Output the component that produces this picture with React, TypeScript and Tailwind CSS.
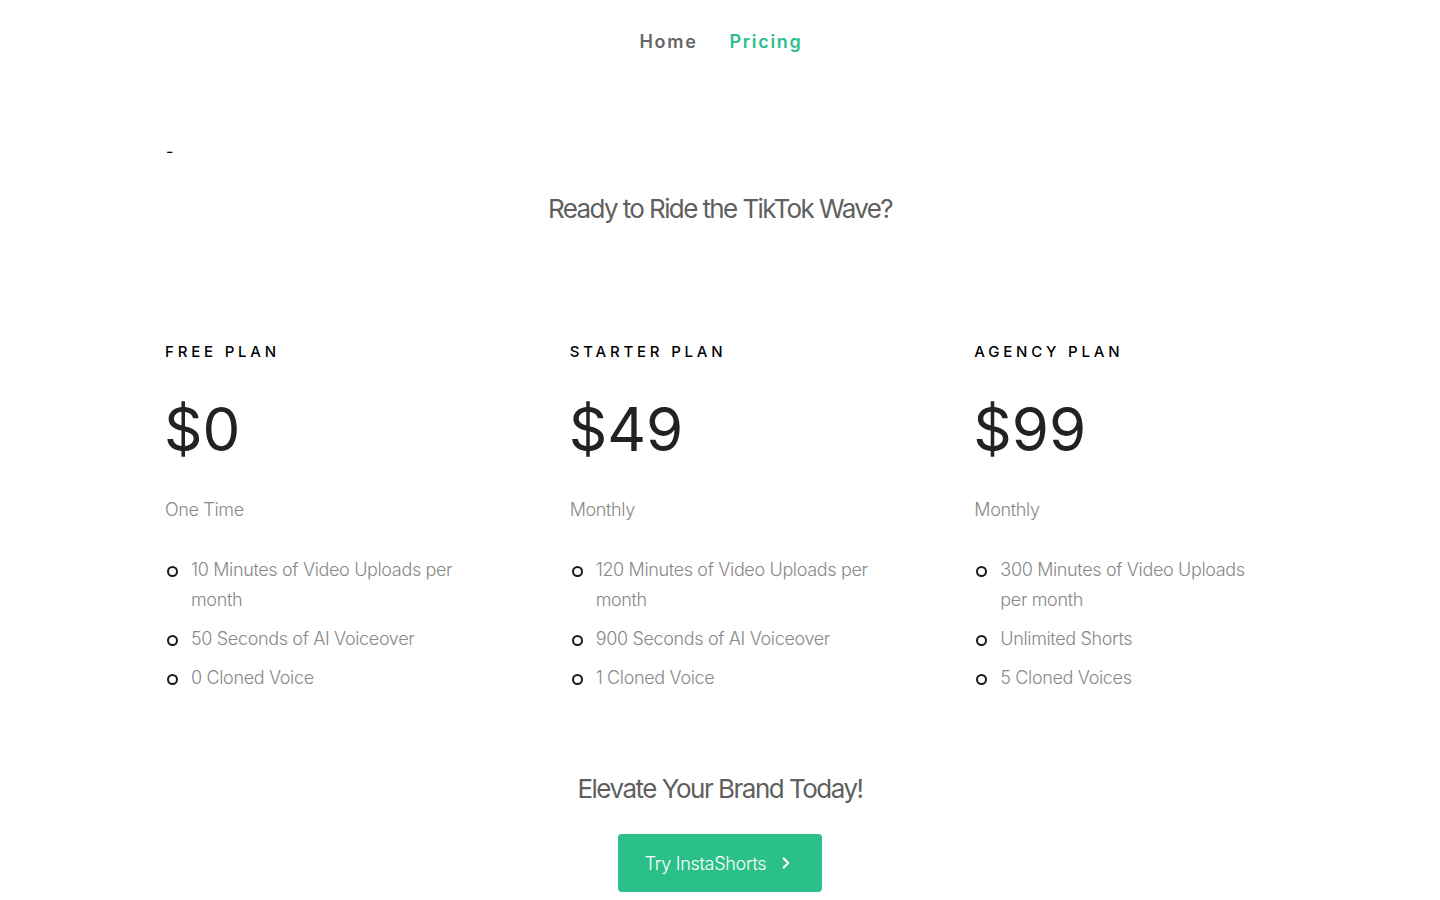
import { ChevronRight } from "lucide-react";

const plans = [
  {
    name: "Free Plan",
    price: "$0",
    period: "One Time",
    features: ["10 Minutes of Video Uploads per month", "50 Seconds of AI Voiceover", "0 Cloned Voice"],
  },
  {
    name: "Starter Plan",
    price: "$49",
    period: "Monthly",
    features: ["120 Minutes of Video Uploads per month", "900 Seconds of AI Voiceover", "1 Cloned Voice"],
  },
  {
    name: "Agency Plan",
    price: "$99",
    period: "Monthly",
    features: ["300 Minutes of Video Uploads per month", "Unlimited Shorts", "5 Cloned Voices"],
  },
];

export default function App() {
  return (
    <div className="min-h-screen bg-white font-['Inter',sans-serif]">
      {/* Nav */}
      <nav className="flex h-[82px] items-center justify-center gap-[32px] pl-[2px]">
        <a className="text-[18px] font-semibold tracking-[1.7px] text-[#666666]">Home</a>
        <a className="text-[18px] font-semibold tracking-[1.7px] text-[#2bbf8a]">Pricing</a>
      </nav>

      <main className="mx-auto w-[1110px]">
        <div className="mt-[57px] pl-[1px] text-[16px] leading-[24px] text-black">-</div>

        <h2 className="mt-[28px] text-center text-[26px] font-normal leading-[36px] tracking-[-1.6px] text-[#5f5f5f]">
          Ready to Ride the TikTok Wave?
        </h2>

        {/* Plans */}
        <div className="mt-[114px] grid w-[1214px] grid-cols-3">
          {plans.map((plan) => (
            <div key={plan.name} className="w-[299px]">
              <h3 className="text-[15px] font-medium uppercase leading-[22px] tracking-[3.8px] text-black">
                {plan.name}
              </h3>
              <div className="mt-[30px] -ml-[1px] text-[60px] font-normal leading-[72px] text-[#222222]">{plan.price}</div>
              <div className="mt-[30px] text-[18px] font-light leading-[30px] tracking-[-0.35px] text-[#888888]">
                {plan.period}
              </div>
              <ul className="mt-[30px] flex flex-col gap-[9px]">
                {plan.features.map((f) => (
                  <li key={f} className="flex items-start gap-[13px]">
                    <span className="mt-[11px] ml-[2px] h-[11px] w-[11px] shrink-0 rounded-full border-2 border-[#1a1a1a]" />
                    <span className="text-[18px] font-light leading-[30px] tracking-[-0.35px] text-[#888888]">{f}</span>
                  </li>
                ))}
              </ul>
            </div>
          ))}
        </div>

        {/* CTA */}
        <h2 className="mt-[78px] text-center text-[26px] font-normal leading-[36px] tracking-[-1.5px] text-[#5f5f5f]">
          Elevate Your Brand Today!
        </h2>
        <div className="mt-[27px] flex justify-center">
          <button className="flex h-[58px] w-[204px] items-center justify-center gap-[11px] rounded-[4px] bg-[#2bbf8a] text-[18px] font-light tracking-[-0.3px] text-white">
            Try InstaShorts
            <ChevronRight className="h-[18px] w-[18px]" strokeWidth={3} />
          </button>
        </div>
      </main>
    </div>
  );
}
